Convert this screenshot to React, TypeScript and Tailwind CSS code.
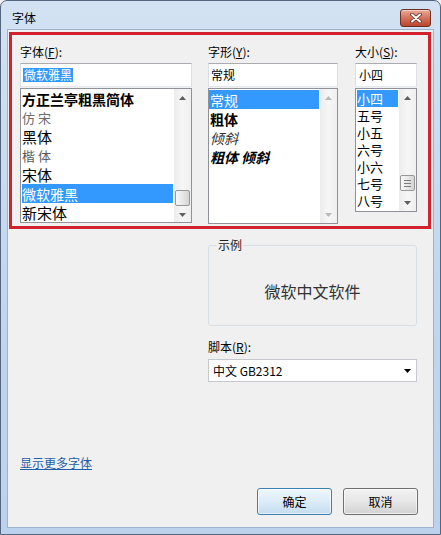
import React from "react";

const FONT = "[font-family:'Noto_Sans_CJK_SC','Liberation_Sans',sans-serif]";

function Arrow({ dir, disabled }: { dir: "up" | "down"; disabled?: boolean }) {
  const c = disabled ? "#b9b9b9" : "#5e5e5e";
  return (
    <div className="h-[17px] w-[17px] flex items-center justify-center shrink-0">
      <svg width="7" height="4" viewBox="0 0 7 4">
        {dir === "up" ? <path d="M0 4 L3.5 0 L7 4 Z" fill={c} /> : <path d="M0 0 L3.5 4 L7 0 Z" fill={c} />}
      </svg>
    </div>
  );
}

function ScrollBar({ spacer, grip, disabled }: { spacer?: string; grip?: boolean; disabled?: boolean }) {
  return (
    <div className="w-[17px] h-full flex flex-col bg-gradient-to-r from-[#ececec] via-[#f6f6f6] to-[#efefef] shrink-0">
      <Arrow dir="up" disabled={disabled} />
      {spacer && (
        <>
          <div className={spacer} />
          <div className="ml-[1px] w-[15px] h-[16px] rounded-[2px] border border-[#979797] bg-gradient-to-r from-[#f7f7f7] via-[#e8e8e8] to-[#d4d4d4] flex flex-col items-center justify-center gap-[2px] shrink-0">
            {grip && (
              <>
                <div className="w-[7px] h-px bg-[#7a7a7a]" />
                <div className="w-[7px] h-px bg-[#7a7a7a]" />
                <div className="w-[7px] h-px bg-[#7a7a7a]" />
              </>
            )}
          </div>
        </>
      )}
      <div className="flex-1" />
      <Arrow dir="down" disabled={disabled} />
    </div>
  );
}

function Label({ children }: { children: React.ReactNode }) {
  return <div className="h-[16px] leading-[16px] text-[12px] text-black">{children}</div>;
}

function Input({ children }: { children: React.ReactNode }) {
  return (
    <div className="mt-[3px] h-[24px] bg-white border border-[#abadb3] border-x-[#dbdfe6] border-b-[#e3e9ef] flex items-center pl-[2px] text-[12px] text-black">
      {children}
    </div>
  );
}

export default function App() {
  return (
    <div className={`w-[441px] h-[535px] relative overflow-hidden bg-[#f0f0f0] ${FONT}`}>
      <div className="w-full h-full rounded-t-[7px] border border-[#54667e] bg-gradient-to-b from-[#d3e2f3] via-[#c3d7ee] to-[#bcd2ec] flex flex-col px-[7px] pb-[7px]">
        {/* title bar */}
        <div className="h-[29px] flex items-start justify-between shrink-0">
          <div className="ml-[4px] mt-[9px] text-[12px] leading-[16px] text-black">字体</div>
          <div className="mt-[8px] mr-[2px] w-[31px] h-[18px] rounded-[3px] border border-[#6e2f24] bg-gradient-to-b from-[#e9ab98] via-[#d2735c] to-[#b8452c] flex items-center justify-center shadow-[inset_0_1px_0_rgba(255,255,255,0.45)]">
            <svg width="12" height="10" viewBox="0 0 12 10">
              <path d="M2 1.5 L10 8.5 M10 1.5 L2 8.5" stroke="#6a2a1e" strokeWidth="3.6" strokeLinecap="round" />
              <path d="M2 1.5 L10 8.5 M10 1.5 L2 8.5" stroke="#ffffff" strokeWidth="2" strokeLinecap="round" />
            </svg>
          </div>
        </div>

        {/* client */}
        <div className="flex-1 bg-[#f0f0f0] relative flex flex-col pt-[14px] text-[12px] leading-[16px] text-black shadow-[0_0_0_1px_#9db2cd]">
          {/* top row */}
          <div className="flex items-start pl-[12px]">
            {/* font */}
            <div className="w-[172px] flex flex-col">
              <Label>
                字体(<span className="underline">F</span>):
              </Label>
              <Input>
                <span className="bg-[#3399ff] text-white px-[1px] leading-[14px]">微软雅黑</span>
              </Input>
              <div className="mt-[1px] h-[135px] bg-white border border-[#8f9399] flex">
                <div className="flex-1 flex flex-col px-[1px] pt-[1px] overflow-hidden">
                  <div className="h-[19px] flex items-center text-[14px] font-bold">方正兰亭粗黑简体</div>
                  <div className="h-[19px] flex items-center text-[13px] tracking-[3px] text-[#6b6b6b]">仿宋</div>
                  <div className="h-[19px] flex items-center text-[15px]">黑体</div>
                  <div className="h-[19px] flex items-center text-[13px] tracking-[3px] text-[#5a5a5a]">楷体</div>
                  <div className="h-[19px] flex items-center text-[15px]">宋体</div>
                  <div className="h-[19px] flex items-center text-[14px] bg-[#3399ff] text-white">微软雅黑</div>
                  <div className="h-[19px] flex items-center text-[15px]">新宋体</div>
                </div>
                <ScrollBar spacer="h-[84px] shrink-0" />
              </div>
            </div>

            {/* style */}
            <div className="w-[130px] ml-[16px] flex flex-col">
              <Label>
                字形(<span className="underline">Y</span>):
              </Label>
              <Input>常规</Input>
              <div className="mt-[1px] h-[136px] bg-white border border-[#8f9399] flex">
                <div className="flex-1 flex flex-col pr-[1px] pt-[1px] overflow-hidden">
                  <div className="h-[19px] flex items-center text-[14px] bg-[#3399ff] text-white pl-[1px]">常规</div>
                  <div className="h-[19px] flex items-center text-[14px] font-bold pl-[1px]">粗体</div>
                  <div className="h-[19px] flex items-center text-[14px] italic text-[#333] pl-[1px]">倾斜</div>
                  <div className="h-[19px] flex items-center text-[14px] italic font-bold pl-[1px]">粗体 倾斜</div>
                </div>
                <ScrollBar disabled />
              </div>
            </div>

            {/* size */}
            <div className="w-[62px] ml-[17px] flex flex-col">
              <Label>
                大小(<span className="underline">S</span>):
              </Label>
              <Input>
                <span className="pl-[1px]">小四</span>
              </Input>
              <div className="mt-[1px] h-[124px] bg-white border border-[#8f9399] flex">
                <div className="flex-1 flex flex-col px-[1px] pt-[1px] overflow-hidden">
                  <div className="h-[17px] flex items-center text-[13px] bg-[#3399ff] text-white">小四</div>
                  <div className="h-[17px] flex items-center text-[13px]">五号</div>
                  <div className="h-[17px] flex items-center text-[13px]">小五</div>
                  <div className="h-[17px] flex items-center text-[13px]">六号</div>
                  <div className="h-[17px] flex items-center text-[13px]">小六</div>
                  <div className="h-[17px] flex items-center text-[13px]">七号</div>
                  <div className="h-[17px] flex items-center text-[13px]">八号</div>
                </div>
                <ScrollBar spacer="h-[69px] shrink-0" grip />
              </div>
            </div>
          </div>

          {/* sample group */}
          <div className="ml-[200px] w-[209px] mt-[21px] h-[81px] relative rounded-[3px] border border-[#d5dfe5] flex items-center justify-center pt-[10px]">
            <div className="absolute -top-[9px] left-[8px] px-[1px] bg-[#f0f0f0] text-[12px] leading-[16px] text-[#222]">示例</div>
            <div className="text-[16px] leading-[20px] text-[#333]">微软中文软件</div>
          </div>

          <div className="ml-[200px] mt-[13px] h-[16px]">
            脚本(<span className="underline">R</span>):
          </div>
          <div className="ml-[200px] w-[209px] mt-[4px] h-[23px] bg-white border border-[#c5c9cf] flex items-center justify-between pl-[4px] pr-[5px]">
            <span>中文 GB2312</span>
            <svg width="7" height="4" viewBox="0 0 7 4">
              <path d="M0 0 L3.5 4 L7 0 Z" fill="#000" />
            </svg>
          </div>

          <div className="ml-[12px] mt-[73px] h-[16px]">
            <span className="text-[#1f5ea8] underline">显示更多字体</span>
          </div>

          <div className="flex justify-end pr-[15px] gap-[11px] mt-[17px]">
            <div className="w-[75px] h-[27px] rounded-[3px] border border-[#3c7fb1] bg-gradient-to-b from-[#eef7fd] via-[#dcecf8] to-[#c3dcef] shadow-[inset_0_0_0_1px_rgba(255,255,255,0.6)] flex items-center justify-center">
              确定
            </div>
            <div className="w-[75px] h-[27px] rounded-[3px] border border-[#707070] bg-gradient-to-b from-[#f2f2f2] via-[#e6e6e6] to-[#d2d2d2] shadow-[inset_0_0_0_1px_rgba(255,255,255,0.6)] flex items-center justify-center">
              取消
            </div>
          </div>

          {/* annotation red box */}
          <div className="absolute left-[1px] top-[2px] w-[422px] h-[197px] border-[3px] border-[#d2222e] pointer-events-none" />
        </div>
      </div>
    </div>
  );
}
